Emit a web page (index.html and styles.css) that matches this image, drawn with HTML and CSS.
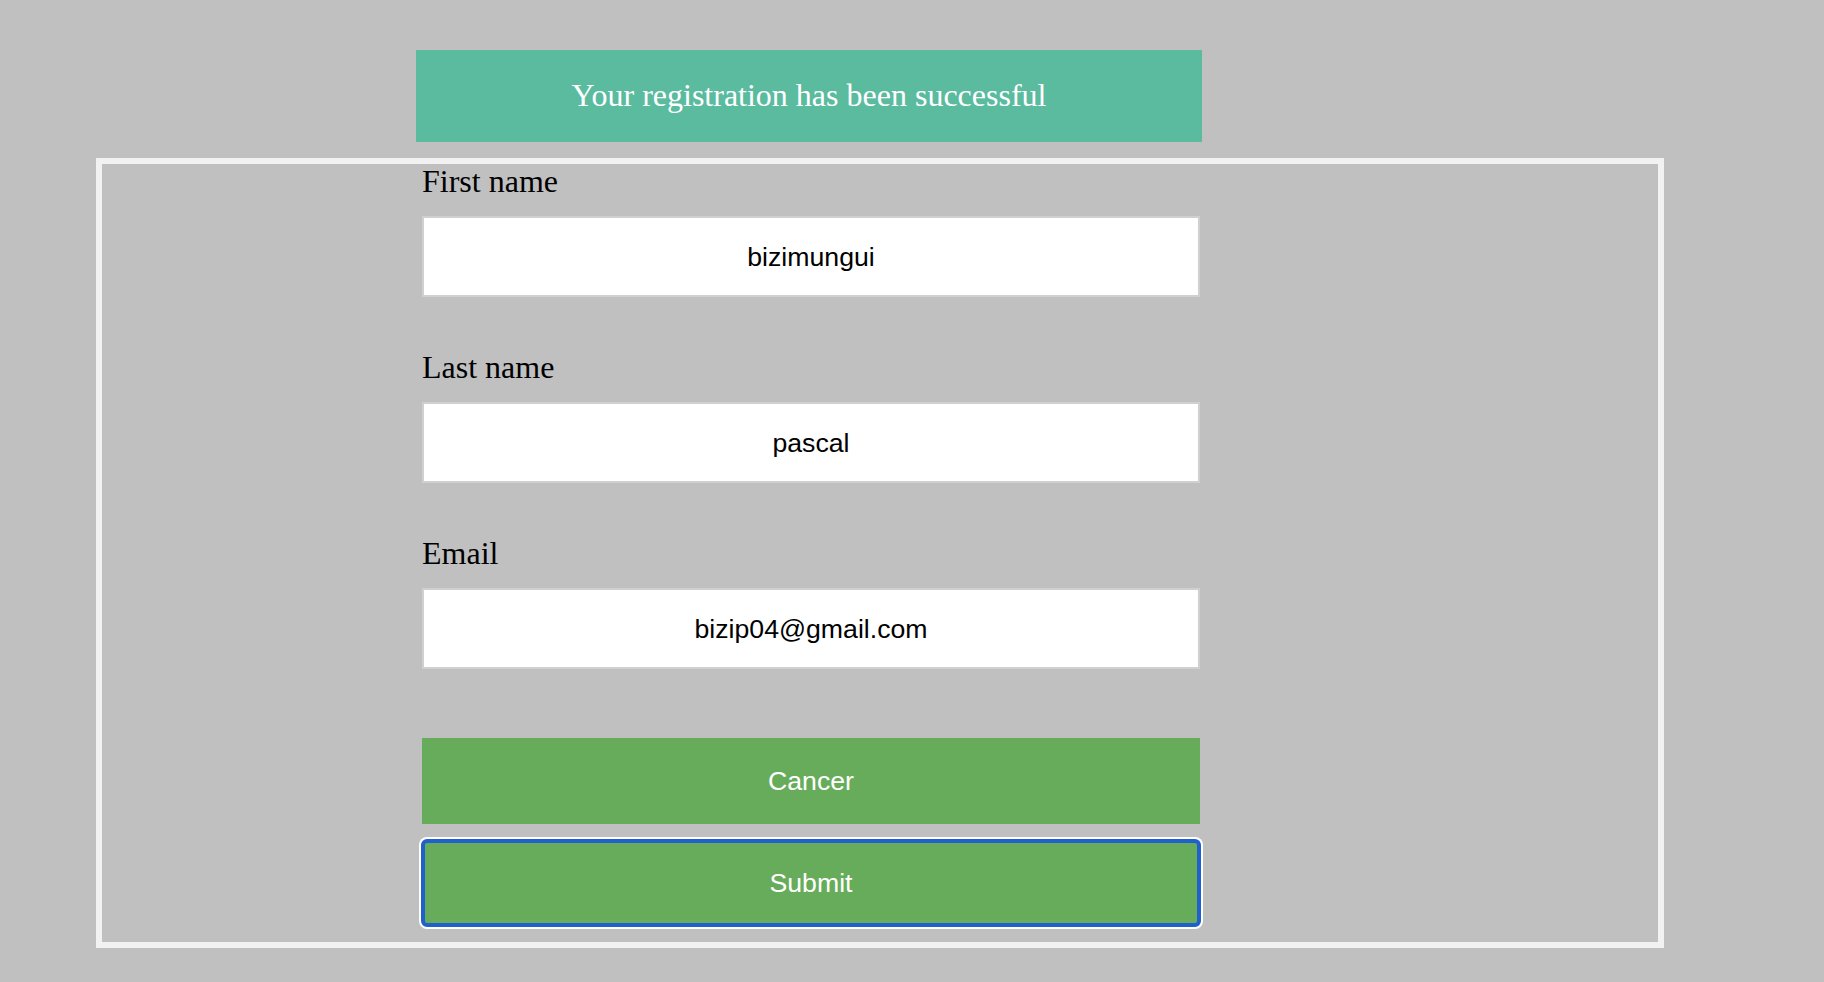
FILE: index.html
```html
<!DOCTYPE html>
<html lang="en">
<head>
<meta charset="utf-8">
<title>Registration</title>
<link rel="stylesheet" href="styles.css">
</head>
<body>
<div class="banner">Your registration has been successful</div>
<div class="card">
  <form class="form">
    <div class="field">
      <label class="label" for="fn">First name</label>
      <input class="input" id="fn" type="text" value="bizimungui">
    </div>
    <div class="field">
      <label class="label" for="ln">Last name</label>
      <input class="input" id="ln" type="text" value="pascal">
    </div>
    <div class="field">
      <label class="label" for="em">Email</label>
      <input class="input" id="em" type="text" value="bizip04@gmail.com">
    </div>
    <div class="actions">
      <button class="btn" type="button">Cancer</button>
      <button class="btn btn-focus" type="button">Submit</button>
    </div>
  </form>
</div>
</body>
</html>
```

FILE: styles.css
```css
html, body {
  margin: 0;
  padding: 0;
}
body {
  background: #c0c0c0;
  padding-top: 50px;
  font-family: "Liberation Serif", "Times New Roman", serif;
}
.banner {
  margin-left: 416px;
  width: 786px;
  height: 92px;
  box-sizing: border-box;
  padding-bottom: 2px;
  background: #5abb9f;
  color: #fff;
  font-size: 32px;
  display: flex;
  align-items: center;
  justify-content: center;
}
.card {
  margin-top: 16px;
  margin-left: 96px;
  width: 1568px;
  box-sizing: border-box;
  border: 6px solid #f2f2f2;
  padding: 0 0 16px 320px;
}
.form {
  width: 778px;
  display: flex;
  flex-direction: column;
  margin: 0;
}
.field {
  display: flex;
  flex-direction: column;
  margin-bottom: 53px;
}
.label {
  font-size: 32px;
  line-height: 35px;
  color: #000;
  margin-bottom: 17px;
}
.input {
  height: 81px;
  box-sizing: border-box;
  border: 2px solid #d0d0d0;
  background: #fff;
  margin: 0;
  padding: 2px 4px 0;
  font-family: "Liberation Sans", Arial, sans-serif;
  font-size: 26.667px;
  color: #000;
  text-align: center;
  outline: none;
}
.actions {
  display: flex;
  flex-direction: column;
  gap: 16px;
  margin-top: 16px;
}
.btn {
  height: 86px;
  width: 778px;
  border: none;
  margin: 0;
  background: #67ac5b;
  color: #fff;
  font-family: "Liberation Sans", Arial, sans-serif;
  font-size: 26.667px;
  padding: 0;
}
.btn-focus {
  border-radius: 5px;
  outline: 4px solid #2060cc;
  outline-offset: -3px;
  box-shadow: 0 0 0 3px #fff;
}
```
